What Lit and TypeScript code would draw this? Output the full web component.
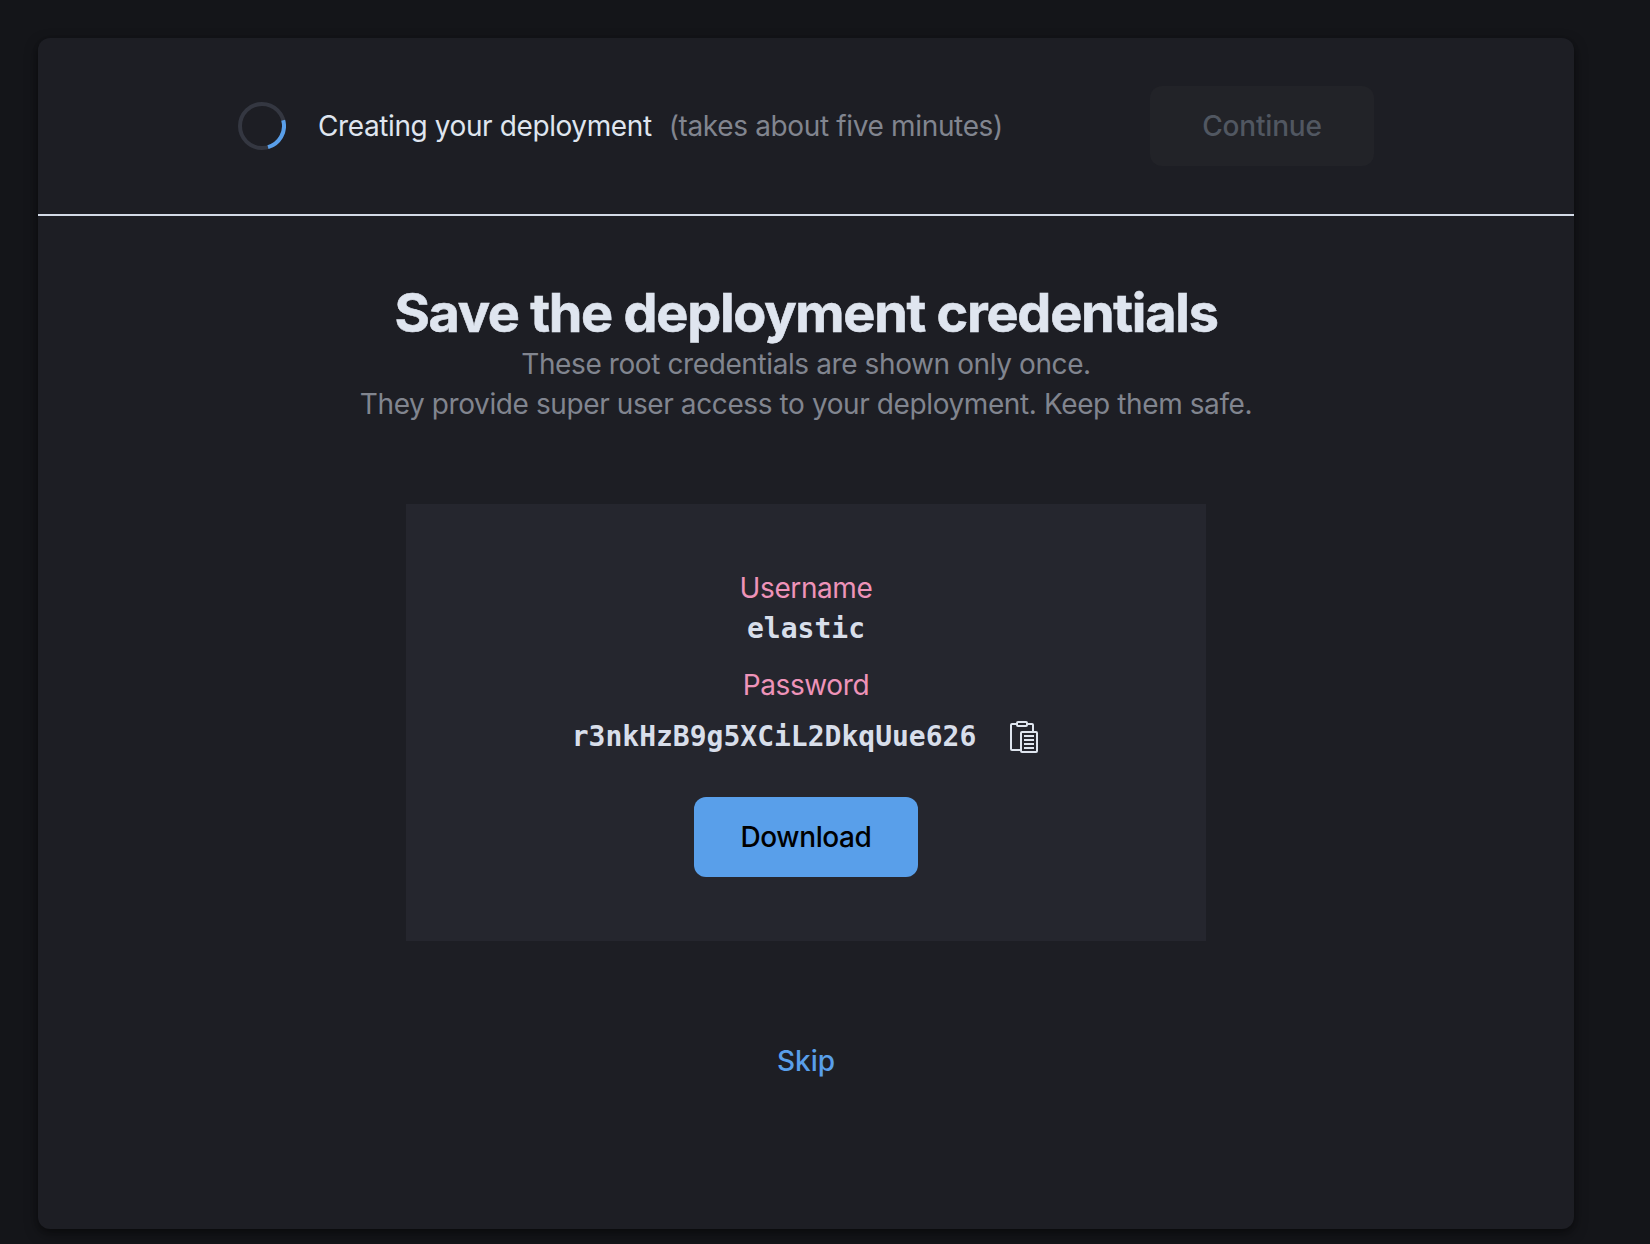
import { LitElement, html, css } from "lit";
import { customElement } from "lit/decorators.js";

@customElement("app-root")
export class AppRoot extends LitElement {
  static styles = css`
    :host {
      display: block;
      box-sizing: border-box;
      height: 1244px;
      padding: 38px 76px 0 38px;
      overflow: hidden;
      background: #141519;
      color: #dfe5ef;
      font: 400 28px/40px Inter, "Liberation Sans", sans-serif;
      letter-spacing: -0.4px;
    }
    * { box-sizing: border-box; }
    .panel {
      height: 1191px;
      border-radius: 12px;
      background: #1d1e24;
      box-shadow: 0 5px 14px rgba(0, 0, 0, 0.4), 0 2px 5px rgba(0, 0, 0, 0.2);
    }
    .header {
      display: flex;
      align-items: center;
      height: 178px;
      padding: 0 200px;
      border-bottom: 2px solid #d3dae6;
    }
    .spinner { width: 48px; height: 48px; margin-right: 32px; flex: none; }
    .status { white-space: nowrap; }
    .hint { margin-left: 17px; color: #81858f; white-space: nowrap; letter-spacing: -0.35px; }
    .button {
      width: 224px;
      height: 80px;
      padding: 0;
      border: 0;
      border-radius: 12px;
      font: inherit;
      font-weight: 500;
      letter-spacing: inherit;
    }
    .continue { margin-left: auto; background: #222328; color: #515761; letter-spacing: -0.2px; }
    .download { margin-top: 40px; background: #599fea; color: #000; }
    .body {
      display: flex;
      flex-direction: column;
      align-items: center;
      padding-top: 65px;
      text-align: center;
    }
    h1 {
      margin: 0;
      font-size: 54px;
      line-height: 64px;
      font-weight: 700;
      letter-spacing: -1.28px;
      white-space: nowrap;
      -webkit-text-stroke: 0.6px currentColor;
    }
    .subtitle { margin-top: -1px; color: #81858f; }
    .credentials {
      display: flex;
      flex-direction: column;
      align-items: center;
      width: 800px;
      height: 437px;
      margin-top: 80px;
      padding-top: 64px;
      background: #25262e;
    }
    .label { color: #ee93b9; }
    .value {
      font-family: "DejaVu Sans Mono", monospace;
      font-weight: 700;
      letter-spacing: 0;
      color: #d8deea;
    }
    .username { margin-top: 1px; }
    .second { margin-top: 16px; }
    .secret { display: flex; align-items: center; height: 40px; margin-top: 12px; }
    .copy { width: 32px; height: 32px; margin-left: 32px; }
    .skip { margin-top: 100px; color: #599fea; font-weight: 500; letter-spacing: 0; text-decoration: none; }
  `;

  render() {
    return html`
      <main class="panel">
        <header class="header">
          <svg class="spinner" viewBox="0 0 48 48" fill="none" stroke-width="4">
            <circle cx="24" cy="24" r="22" stroke="#343741" />
            <path d="M45.2 18.2A22 22 0 0 1 30 45.2" stroke="#599fea" />
          </svg>
          <span class="status">Creating your deployment</span>
          <span class="hint">(takes about five minutes)</span>
          <button class="button continue" disabled>Continue</button>
        </header>
        <section class="body">
          <h1>Save the deployment credentials</h1>
          <div class="subtitle">
            These root credentials are shown only once.<br />
            They provide super user access to your deployment. Keep them safe.
          </div>
          <div class="credentials">
            <div class="label">Username</div>
            <div class="value username">elastic</div>
            <div class="label second">Password</div>
            <div class="secret">
              <span class="value">r3nkHzB9g5XCiL2DkqUue626</span>
              <svg class="copy" viewBox="0 0 32 32" fill="none" stroke="#dfe5ef" stroke-width="2" stroke-linejoin="round">
                <path d="M8 3H4Q3 3 3 4V28Q3 29 4 29H12M18 3H24Q25 3 25 4V11" />
                <rect x="9" y="1" width="10" height="4" rx="1" />
                <rect x="13" y="11" width="16" height="20" rx="1" />
                <path d="M16 15H26M16 19H26M16 23H26M16 27H26" />
              </svg>
            </div>
            <button class="button download">Download</button>
          </div>
          <a class="skip">Skip</a>
        </section>
      </main>
    `;
  }
}
